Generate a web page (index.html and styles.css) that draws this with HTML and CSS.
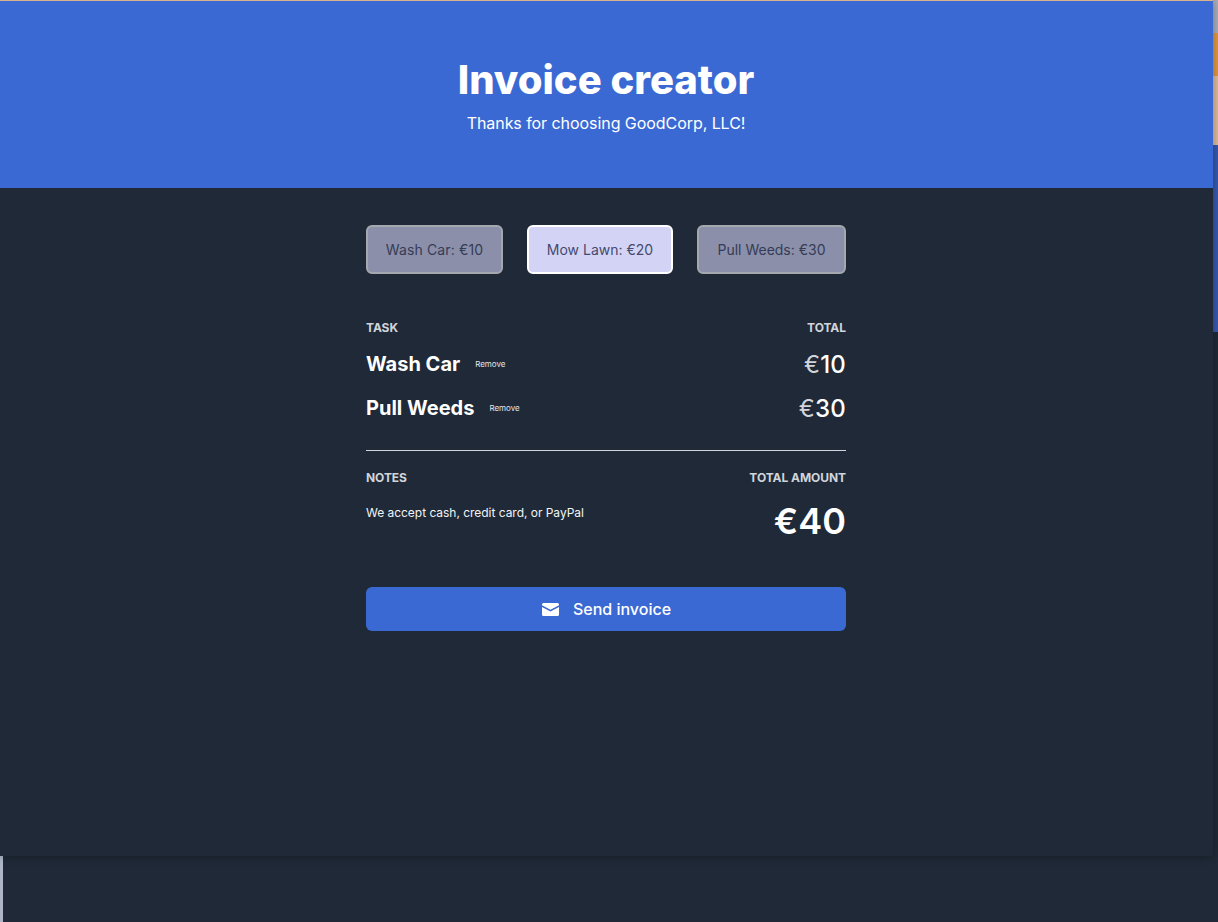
FILE: index.html
```html
<!DOCTYPE html>
<html lang="en">
<head>
<meta charset="utf-8">
<title>Invoice creator</title>
<link rel="stylesheet" href="styles.css">
</head>
<body>
<div class="desk">
  <div class="window">
    <header class="hero">
      <h1 class="hero-title">Invoice creator</h1>
      <p class="hero-sub">Thanks for choosing GoodCorp, LLC!</p>
    </header>
    <main class="content">
      <div class="choices">
        <button class="choice choice-wash">Wash Car: €10</button>
        <button class="choice choice-active">Mow Lawn: €20</button>
        <button class="choice choice-pull">Pull Weeds: €30</button>
      </div>
      <div class="row labels">
        <span>TASK</span>
        <span>TOTAL</span>
      </div>
      <div class="row item">
        <div class="item-left"><span class="item-name">Wash Car</span><a class="remove">Remove</a></div>
        <div class="item-price"><span class="euro">€</span>10</div>
      </div>
      <div class="row item">
        <div class="item-left"><span class="item-name">Pull Weeds</span><a class="remove">Remove</a></div>
        <div class="item-price"><span class="euro">€</span>30</div>
      </div>
      <hr class="rule">
      <div class="row labels">
        <span>NOTES</span>
        <span>TOTAL AMOUNT</span>
      </div>
      <div class="row summary">
        <p class="notes">We accept cash, credit card, or PayPal</p>
        <div class="grand">€40</div>
      </div>
      <button class="send">
        <svg class="send-icon" viewBox="0 0 17 13" width="17" height="13" aria-hidden="true"><path fill="#fff" d="M0 1.5A1.5 1.5 0 0 1 1.5 0h14A1.5 1.5 0 0 1 17 1.5v.7L8.5 6.8 0 2.2z"/><path fill="#fff" d="M0 4v7.5A1.5 1.5 0 0 0 1.5 13h14a1.5 1.5 0 0 0 1.5-1.5V4L8.5 8.6z"/></svg>
        <span>Send invoice</span>
      </button>
    </main>
  </div>
  <div class="strip">
    <div class="strip-a"></div>
    <div class="strip-b"></div>
    <div class="strip-c"></div>
    <div class="strip-d"></div>
  </div>
</div>
<div class="below"><div class="sliver"></div></div>
</body>
</html>
```
FILE: styles.css
```css
* { box-sizing: border-box; }
html, body { margin: 0; height: 100%; }
body {
  background: #1f2937;
  font-family: Inter, "Liberation Sans", sans-serif;
  color: #fff;
  overflow: hidden;
}
.desk { display: flex; height: 856px; }
.window {
  width: 1213px;
  height: 856px;
  padding-right: 1px;
  background: #1f2937;
  box-shadow: 0 0 8px rgba(0, 0, 0, 0.35);
  position: relative;
  z-index: 1;
}
.hero {
  height: 188px;
  margin-right: -1px;
  padding-right: 1px;
  background: #3b69d3;
  border-top: 1px solid #d9b48a;
  text-align: center;
  padding-top: 55px;
}
.hero-title {
  margin: 0;
  font-size: 40px;
  line-height: 48px;
  font-weight: 800;
}
.hero-sub {
  margin: 7px 0 0;
  font-size: 16px;
  line-height: 24px;
  letter-spacing: -0.06px;
}
.content { width: 480px; margin: 0 auto; padding-top: 37px; }
.choices { display: flex; gap: 24px; }
.choice {
  height: 49px;
  padding: 0;
  border: 2px solid #fff;
  border-radius: 6px;
  background: #d3d4f5;
  color: #454a6e;
  font: 400 14px Inter, sans-serif;
  opacity: 0.6;
}
.choice-wash { flex: 0 0 137px; letter-spacing: 0.15px; }
.choice-active { flex: 0 0 146px; opacity: 1; }
.choice-pull { flex: 0 0 149px; }
.row { display: flex; justify-content: space-between; }
.labels {
  font-size: 12px;
  line-height: 16px;
  font-weight: 700;
  letter-spacing: -0.06px;
  color: #d1d5db;
  margin-top: 46px;
}
.item { align-items: center; height: 44px; }
.labels + .item { margin-top: 6px; height: 44px; }
.item-left { display: flex; align-items: center; }
.item-name { font-size: 20px; font-weight: 700; }
.remove { margin-left: 15px; font-size: 8px; color: #e5e7eb; }
.item-price { font-size: 24px; font-weight: 500; letter-spacing: 0.2px; }
.euro { font-weight: 400; color: #d1d5db; }
.rule { border: 0; border-top: 1px solid #d1d5db; margin: 20px 0 0; }
.rule + .labels { margin-top: 19px; }
.summary { margin-top: 12px; align-items: flex-start; }
.notes { margin: 7px 0 0; font-size: 12px; line-height: 16px; color: #f3f4f6; letter-spacing: -0.03px; }
.grand { font-size: 36px; line-height: 40px; font-weight: 600; padding-top: 3px; }
.send {
  display: flex;
  align-items: center;
  justify-content: center;
  gap: 14px;
  width: 100%;
  height: 44px;
  margin-top: 46px;
  padding: 0 0 0 1px;
  border: 0;
  border-radius: 6px;
  background: #3b69d3;
  color: #fff;
  font: 500 16px Inter, sans-serif;
}
.strip { flex: 1; display: flex; flex-direction: column; }
.strip-a { height: 33px; background: #a9aeb8; }
.strip-b { height: 43px; background: #e0973f; }
.strip-c { height: 69px; background: #dcbb98; }
.strip-d { height: 187px; background: #3658ad; }
.below { height: 66px; }
.sliver { width: 3px; height: 100%; background: #adb5c6; }
```
